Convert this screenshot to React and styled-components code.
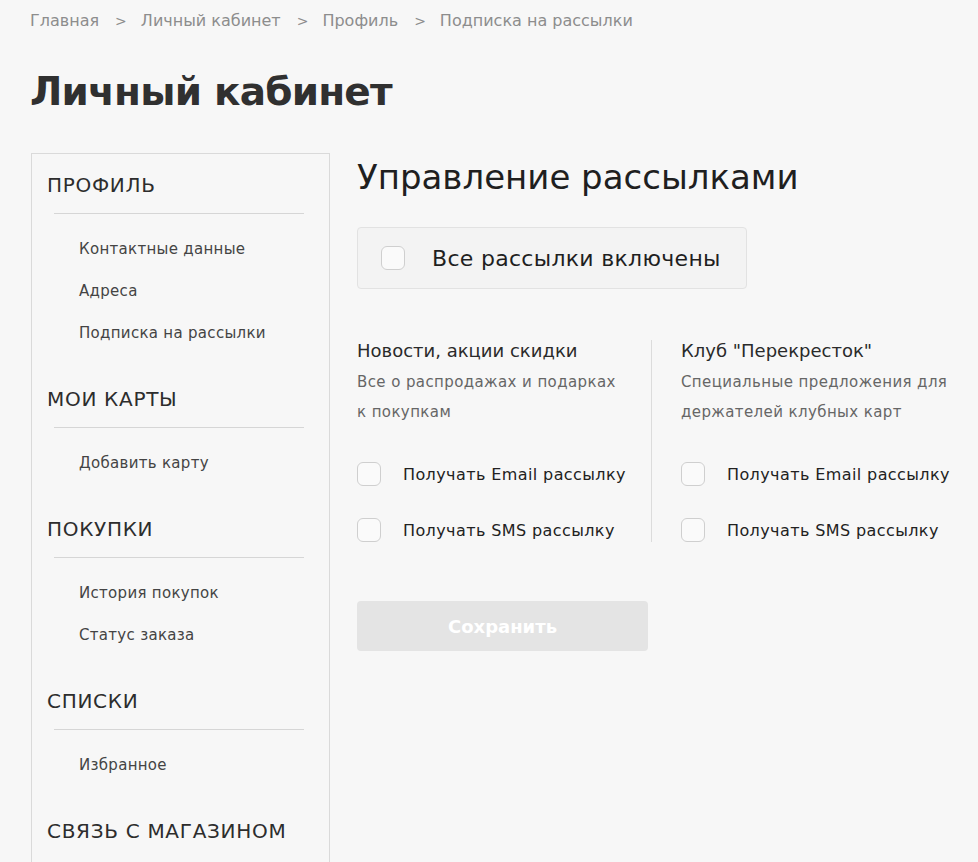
import React from "react"
import styled, { createGlobalStyle } from "styled-components"

const GlobalStyle = createGlobalStyle`
  body {
    margin: 0;
    background: #f7f7f7;
    font-family: "DejaVu Sans", "Liberation Sans", sans-serif;
    color: #222;
  }
`

const Page = styled.div`
  padding: 10px 0 0 30px;
  width: 978px;
  height: 862px;
  overflow: hidden;
  box-sizing: border-box;
`

const Crumbs = styled.nav`
  display: flex;
  align-items: center;
  font-size: 16px;
  line-height: 22px;
  color: #8d8d8d;
  white-space: nowrap;
`

const Sep = styled.span`
  margin: 0 14px 0 16px;
  font-size: 14px;
`

const Title = styled.h1`
  margin: 35px 0 0;
  font-size: 39px;
  line-height: 50px;
  font-weight: 700;
  color: #303030;
  letter-spacing: -0.8px;
`

const Layout = styled.div`
  display: grid;
  grid-template-columns: 299px 1fr;
  column-gap: 27px;
  margin-top: 36px;
  margin-left: 1px;
`

const Sidebar = styled.aside`
  border: 1px solid #dadada;
  border-bottom: none;
  padding: 19px 0 0 15px;
  height: 720px;
  box-sizing: border-box;
`

const Section = styled.div`
  margin-bottom: 33px;
`

const SectionHead = styled.div`
  font-size: 20px;
  line-height: 24px;
  color: #2d2d2d;
  white-space: nowrap;
  letter-spacing: 0.7px;
`

const Divider = styled.div`
  height: 1px;
  background: #d6d6d6;
  margin: 16px 25px 14px 7px;
`

const NavItem = styled.a`
  display: block;
  padding-left: 32px;
  font-size: 15px;
  line-height: 42px;
  color: #444;
  text-decoration: none;
  letter-spacing: 0.3px;
`

const Main = styled.main`
  padding-top: 4px;
`

const MainTitle = styled.h2`
  margin: 0;
  font-size: 34px;
  line-height: 40px;
  font-weight: 400;
  color: #1f1f1f;
  white-space: nowrap;
`

const AllBox = styled.label`
  display: flex;
  align-items: center;
  width: 390px;
  height: 62px;
  margin-top: 30px;
  padding-left: 23px;
  box-sizing: border-box;
  border: 1px solid #e2e2e2;
  border-radius: 4px;
  background: #f3f3f3;
  font-size: 22px;
  letter-spacing: 0.3px;
  color: #1f1f1f;
  white-space: nowrap;
`

const Box = styled.span`
  flex: none;
  width: 24px;
  height: 24px;
  box-sizing: border-box;
  border: 1px solid #cfcfcf;
  border-radius: 6px;
  background: #fafafa;
  margin-right: ${p => p.$gap}px;
`

const Columns = styled.div`
  display: flex;
  margin-top: 51px;
`

const Column = styled.div`
  width: ${p => p.$w}px;
  padding-left: ${p => p.$pad}px;
  border-left: ${p => (p.$line ? "1px solid #dcdcdc" : "none")};
  box-sizing: border-box;
`

const ColHead = styled.div`
  font-size: 18px;
  line-height: 22px;
  color: #2a2a2a;
  white-space: nowrap;
`

const ColText = styled.p`
  margin: 5px 0 0;
  font-size: 15px;
  line-height: 30px;
  letter-spacing: 0.4px;
  color: #666;
  white-space: nowrap;
`

const Option = styled.label`
  display: flex;
  align-items: center;
  height: 24px;
  margin-top: ${p => p.$top}px;
  font-size: 16px;
  letter-spacing: 0.4px;
  color: #222;
  white-space: nowrap;
`

const SaveButton = styled.button`
  display: block;
  width: 291px;
  height: 50px;
  margin-top: 59px;
  border: none;
  border-radius: 4px;
  background: #e4e4e4;
  color: #fff;
  font-family: inherit;
  font-size: 18px;
  font-weight: 700;
`

const menu = [
  { title: "ПРОФИЛЬ", items: ["Контактные данные", "Адреса", "Подписка на рассылки"] },
  { title: "МОИ КАРТЫ", items: ["Добавить карту"] },
  { title: "ПОКУПКИ", items: ["История покупок", "Статус заказа"] },
  { title: "СПИСКИ", items: ["Избранное"] },
  { title: "СВЯЗЬ С МАГАЗИНОМ", items: [] },
]

const groups = [
  {
    title: "Новости, акции скидки",
    text: ["Все о распродажах и подарках", "к покупкам"],
  },
  {
    title: "Клуб \"Перекресток\"",
    text: ["Специальные предложения для", "держателей клубных карт"],
  },
]

const SubscriptionGroup = ({ group }) => (
  <>
    <ColHead>{group.title}</ColHead>
    <ColText>
      {group.text[0]}
      <br />
      {group.text[1]}
    </ColText>
    <Option $top={35}>
      <Box $gap={22} />
      Получать Email рассылку
    </Option>
    <Option $top={32}>
      <Box $gap={22} />
      Получать SMS рассылку
    </Option>
  </>
)

const App = () => {
  const crumbs = ["Главная", "Личный кабинет", "Профиль", "Подписка на рассылки"]
  return (
    <Page>
      <GlobalStyle />
      <Crumbs>
        {crumbs.map((c, i) => (
          <React.Fragment key={c}>
            {i > 0 && <Sep>&gt;</Sep>}
            <span>{c}</span>
          </React.Fragment>
        ))}
      </Crumbs>
      <Title>Личный кабинет</Title>
      <Layout>
        <Sidebar>
          {menu.map(s => (
            <Section key={s.title}>
              <SectionHead>{s.title}</SectionHead>
              {s.items.length > 0 && <Divider />}
              {s.items.map(it => (
                <NavItem key={it}>{it}</NavItem>
              ))}
            </Section>
          ))}
        </Sidebar>
        <Main>
          <MainTitle>Управление рассылками</MainTitle>
          <AllBox>
            <Box $gap={27} />
            Все рассылки включены
          </AllBox>
          <Columns>
            <Column $w={294} $pad={0}>
              <SubscriptionGroup group={groups[0]} />
            </Column>
            <Column $w={300} $pad={29} $line>
              <SubscriptionGroup group={groups[1]} />
            </Column>
          </Columns>
          <SaveButton>Сохранить</SaveButton>
        </Main>
      </Layout>
    </Page>
  )
}

export default App
